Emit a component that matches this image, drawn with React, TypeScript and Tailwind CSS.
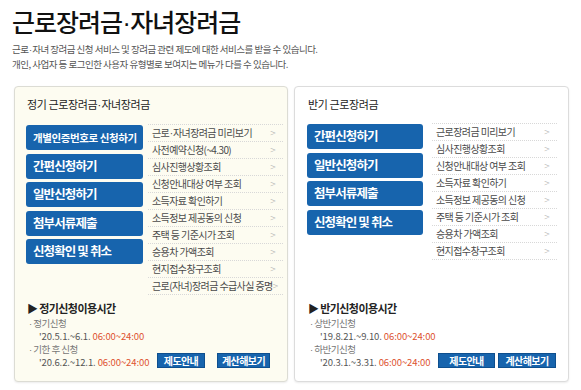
import React from "react";

const FONT = { fontFamily: '"Noto Sans CJK KR", "Noto Sans", sans-serif' };

function T({ s }: { s: string }) {
  const parts = s.split("·");
  return (
    <>
      {parts.map((p, i) => (
        <React.Fragment key={i}>
          {i > 0 && <span className="font-['Liberation_Sans'] px-[0.5px]">·</span>}
          {p}
        </React.Fragment>
      ))}
    </>
  );
}

function MenuList({ items }: { items: string[] }) {
  return (
    <div className="flex flex-col border-b border-dotted border-[#d8d8d8]">
      {items.map((t) => (
        <div
          key={t}
          className="h-[17px] flex items-center justify-between border-t border-dotted border-[#d8d8d8] pl-[4px] pr-[8px] text-[10px] leading-none tracking-[-0.6px] text-[#4a4a4a] whitespace-nowrap"
        >
          <span>
            <T s={t} />
          </span>
          <span className="text-[#aaa] text-[10px] font-light">&gt;</span>
        </div>
      ))}
    </div>
  );
}

function BigButtons({ items, first }: { items: string[]; first?: boolean }) {
  return (
    <div className="flex flex-col gap-[3.5px] mt-[1px]">
      {items.map((t, i) => (
        <div
          key={t}
          className={
            "h-[25px] flex items-center rounded-[3px] bg-[#1764ad] text-white font-bold pl-[7px] whitespace-nowrap " +
            (first && i === 0
              ? "text-[10.5px] tracking-[-0.4px]"
              : "text-[12.5px] tracking-[-0.9px]")
          }
        >
          {t}
        </div>
      ))}
    </div>
  );
}

function Schedule({
  title,
  rows,
}: {
  title: string;
  rows: { label: string; date: string }[];
}) {
  return (
    <div className="flex flex-col">
      <div className="text-[11px] leading-[15px] font-bold text-[#222] tracking-[-0.6px] whitespace-nowrap">
        ▶ {title}
      </div>
      {rows.map((r, i) => (
        <div key={r.label} className={"flex flex-col pl-[2px] " + (i === 0 ? "mt-[1px]" : "")}>
          <div className="text-[9.5px] leading-[13px] text-[#777] tracking-[-0.5px] whitespace-nowrap">
            <span className="font-['Liberation_Sans']">·</span> {r.label}
          </div>
          <div className="text-[9.5px] leading-[13px] pl-[10px] text-[#555] tracking-[-0.1px] whitespace-nowrap">
            {r.date} <span className="text-[#dd5230]">06:00~24:00</span>
          </div>
        </div>
      ))}
    </div>
  );
}

function SmallBtn({ label, w }: { label: string; w: string }) {
  return (
    <div
      className={
        "h-[15px] flex items-center justify-center bg-[#1764ad] border border-[#0e4f8e] text-white text-[10px] font-bold tracking-[-0.6px] whitespace-nowrap " +
        w
      }
    >
      {label}
    </div>
  );
}

export default function App() {
  return (
    <div className="w-[581px] h-[390px] bg-white overflow-hidden" style={FONT}>
      <div className="pt-[7px] pl-[12px]">
        <div className="text-[25px] leading-[29px] font-medium text-[#111] tracking-[-1px] whitespace-nowrap">
          <T s="근로장려금·자녀장려금" />
        </div>
        <div className="mt-[4px] text-[9.5px] leading-[14px] text-[#555] tracking-[-0.5px] whitespace-nowrap">
          <div>
            <T s="근로·자녀 장려금 신청 서비스 및 장려금 관련 제도에 대한 서비스를 받을 수 있습니다." />
          </div>
          <div>개인, 사업자 등 로그인한 사용자 유형별로 보여지는 메뉴가 다를 수 있습니다.</div>
        </div>
      </div>

      <div className="mt-[15px] pl-[14px] flex gap-[6px]">
        {/* Left card */}
        <div className="w-[274px] h-[296px] flex flex-col rounded-[4px] border border-[#dcdcd4] bg-[#fdfcf1] shadow-[0_1px_2px_rgba(0,0,0,0.08)] pl-[11px] pr-[4px] pt-[9px] pb-[12px]">
          <div className="pl-[1px] text-[11px] leading-[16px] text-[#222] tracking-[-0.4px] whitespace-nowrap">
            <T s="정기 근로장려금·자녀장려금" />
          </div>
          <div className="mt-[11px] flex gap-[5px]">
            <div className="w-[117px]">
              <BigButtons
                first
                items={[
                  "개별인증번호로 신청하기",
                  "간편신청하기",
                  "일반신청하기",
                  "첨부서류제출",
                  "신청확인 및 취소",
                ]}
              />
            </div>
            <div className="w-[135px]">
              <MenuList
                items={[
                  "근로·자녀장려금 미리보기",
                  "사전예약신청(~4.30)",
                  "심사진행상황조회",
                  "신청안내대상 여부 조회",
                  "소득자료 확인하기",
                  "소득정보 제공동의 신청",
                  "주택 등 기준시가 조회",
                  "승용차 가액조회",
                  "현지접수창구조회",
                  "근로(자녀)장려금 수급사실 증명",
                ]}
              />
            </div>
          </div>
          <div className="mt-auto flex items-end justify-between pl-[1px] pr-[13px]">
            <Schedule
              title="정기신청이용시간"
              rows={[
                { label: "정기신청", date: "'20.5.1.~6.1." },
                { label: "기한 후 신청", date: "'20.6.2.~12.1." },
              ]}
            />
            <div className="flex gap-[12px] mb-[1px]">
              <SmallBtn label="제도안내" w="w-[48px]" />
              <SmallBtn label="계산해보기" w="w-[53px]" />
            </div>
          </div>
        </div>

        {/* Right card */}
        <div className="w-[275px] h-[296px] flex flex-col rounded-[4px] border border-[#dcdcdc] bg-white shadow-[0_1px_2px_rgba(0,0,0,0.08)] pl-[12px] pr-[11px] pt-[9px] pb-[12px]">
          <div className="pl-[1px] text-[11px] leading-[16px] text-[#222] tracking-[-0.4px] whitespace-nowrap">
            반기 근로장려금
          </div>
          <div className="mt-[11px] flex gap-[9px]">
            <div className="w-[116px]">
              <BigButtons
                items={["간편신청하기", "일반신청하기", "첨부서류제출", "신청확인 및 취소"]}
              />
            </div>
            <div className="w-[125px]">
              <MenuList
                items={[
                  "근로장려금 미리보기",
                  "심사진행상황조회",
                  "신청안내대상 여부 조회",
                  "소득자료 확인하기",
                  "소득정보 제공동의 신청",
                  "주택 등 기준시가 조회",
                  "승용차 가액조회",
                  "현지접수창구조회",
                ]}
              />
            </div>
          </div>
          <div className="mt-auto flex items-end justify-between pl-[1px] pr-[1px]">
            <Schedule
              title="반기신청이용시간"
              rows={[
                { label: "상반기신청", date: "'19.8.21.~9.10." },
                { label: "하반기신청", date: "'20.3.1.~3.31." },
              ]}
            />
            <div className="flex gap-[3px] mb-[1px]">
              <SmallBtn label="제도안내" w="w-[57px]" />
              <SmallBtn label="계산해보기" w="w-[58px]" />
            </div>
          </div>
        </div>
      </div>
    </div>
  );
}
